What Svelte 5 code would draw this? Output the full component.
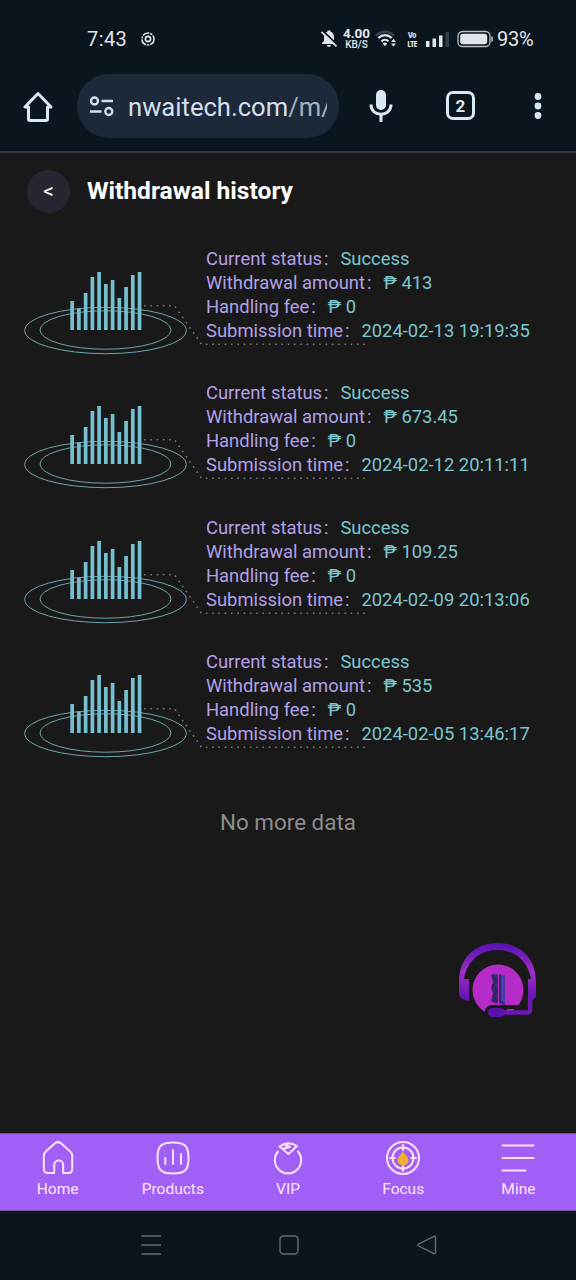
<script>
    let title = "Withdrawal history";

    const records = [
        { status: "Success", amount: "413", fee: "0", time: "2024-02-13 19:19:35" },
        { status: "Success", amount: "673.45", fee: "0", time: "2024-02-12 20:11:11" },
        { status: "Success", amount: "109.25", fee: "0", time: "2024-02-09 20:13:06" },
        { status: "Success", amount: "535", fee: "0", time: "2024-02-05 13:46:17" },
    ];

    const tabs = ["Home", "Products", "VIP", "Focus", "Mine"];

    // top edge of each bar in the chart artwork
    const bars = [61, 68.5, 53, 37, 32, 44, 40, 58, 47, 35, 32];
</script>

<div class="phone">
    <header class="status-bar">
        <span class="clock">7:43</span>
        <svg class="app-dot" width="14" height="14" viewBox="0 0 14 14">
            <circle cx="7" cy="7" r="6" stroke-dasharray="7 1 2 1" />
            <circle cx="7" cy="7" r="2.6" />
        </svg>
        <div class="indicators">
            <svg width="18" height="20" viewBox="0 0 18 20">
                <path class="solid" d="M2 15v-1l2-2V8c0-3 1.500-4.700 3.500-5.200V1.500h3v1.300c2 .5 3.500 2.200 3.500 5.200v4l2 2v1zM7 16h4a2 2 0 0 1-4 0z" />
                <path d="M2.500 1.500 17.500 16" stroke="#0b151e" stroke-width="1.800" />
                <path d="M1.500 2.800 16.500 17.300" stroke="#e1e5e9" stroke-width="1.700" />
            </svg>
            <div class="speed"><b>4.00</b><span>KB/S</span></div>
            <svg class="wifi" width="22" height="20" viewBox="0 0 22 20">
                <path d="M1 6.500c5.500-5 12.500-5 18 0" stroke="#3a434b" stroke-width="2.500" />
                <path d="M3.300 9c4-3.800 9.400-3.800 13.400 0M6.500 12.300c2.100-2 5-2 7 0" stroke="#e1e5e9" stroke-width="2.300" />
                <path class="solid" d="m7.600 14.500 2.400 2.700 2.400-2.700c-1.400-1.200-3.400-1.200-4.800 0zM16 13l2.500-3 2.500 3zM16 14.500h5l-2.500 3z" />
            </svg>
            <div class="volte"><span>Vo</span><span>LTE</span></div>
            <svg class="signal" width="23" height="18" viewBox="0 0 23 18">
                <path class="solid" d="M0 11h3.500v6H0zM6.500 8.500H10V17H6.500zM13 5.500h3.500V17H13z" />
                <path d="M19.500 2H23v15h-3.500z" fill="#353e46" />
            </svg>
            <svg class="battery" width="36" height="18" viewBox="0 0 36 18">
                <rect x="1" y="1.500" width="32" height="15" rx="4.500" stroke="#b9bec3" stroke-width="1.300" />
                <rect class="solid" x="3.200" y="3.700" width="27" height="10.600" rx="2.800" />
                <path d="M35 6.500v5" stroke="#b9bec3" stroke-width="1.600" />
            </svg>
            <span class="percent">93%</span>
        </div>
    </header>

    <nav class="browser" aria-label="Browser">
        <svg class="home" width="30" height="32" viewBox="0 0 30 32">
            <path d="M2 17h3.500v12q0 1.500 1.500 1.500h16q1.500 0 1.500-1.500V17H28L15 3.500z" stroke="#dce7f5" stroke-width="3" stroke-linejoin="round" />
        </svg>
        <div class="address">
            <svg width="26" height="22" viewBox="0 0 26 22">
                <g stroke="#d3deed" stroke-width="2.400">
                    <circle cx="5.500" cy="6" r="3.500" />
                    <path d="M12.500 6H24M1 16.500h11.500" />
                    <circle cx="19.800" cy="16.500" r="3.500" />
                </g>
            </svg>
            <span class="url">nwaitech.com<i>/m/</i></span>
        </div>
        <svg class="mic" width="24" height="34" viewBox="0 0 24 34">
            <rect x="7" y="1" width="10" height="20" rx="5" fill="#dce7f5" />
            <path d="M2 15.500c0 13 20 13 20 0M12 25v8" stroke="#dce7f5" stroke-width="3" />
        </svg>
        <div class="tab-count">2</div>
        <svg class="dots" width="8" height="28" viewBox="0 0 8 28">
            <circle cx="4" cy="4.500" r="3.400" />
            <circle cx="4" cy="14" r="3.400" />
            <circle cx="4" cy="23.500" r="3.400" />
        </svg>
    </nav>

    <main>
        <div class="heading">
            <button type="button" aria-label="Back">&lt;</button>
            <h1>{title}</h1>
        </div>

        <section class="records">
            {#each records as record}
                <article class="record">
                    <svg class="artwork" width="360" height="134" viewBox="0 0 360 134">
                        <g stroke="#6fa3ad" stroke-width="1">
                            <ellipse cx="95.500" cy="90.500" rx="80.800" ry="23.200" />
                            <ellipse cx="95.500" cy="90" rx="65.500" ry="19.200" />
                        </g>
                        {#each bars as top, i}
                            <rect x={60.300 + i * 6.740} y={top} width="3.700" height={90 - top} fill="#75bfd0" />
                        {/each}
                        <path d="M134 65.700h30.500l27 38.600H359" stroke="#77777c" stroke-width="1.600" stroke-dasharray="1.600 4.700" />
                    </svg>
                    <div class="details">
                        <p>Current status<span class="colon">:</span><em>{record.status}</em></p>
                        <p>Withdrawal amount<span class="colon">:</span><em>₱ {record.amount}</em></p>
                        <p>Handling fee<span class="colon">:</span><em>₱ {record.fee}</em></p>
                        <p>Submission time<span class="colon">:</span><em>{record.time}</em></p>
                    </div>
                </article>
            {/each}
        </section>
        <p class="end">No more data</p>
    </main>

    <!-- Floating support button -->
    <button type="button" class="support" aria-label="Customer service">
        <svg width="82" height="78" viewBox="0 0 82 78">
            <defs>
                <linearGradient id="band" x2="0" y2="1">
                    <stop offset="0" stop-color="#5611b0" />
                    <stop offset=".5" stop-color="#a12cc5" />
                    <stop offset="1" stop-color="#5d12b5" />
                </linearGradient>
            </defs>
            <circle cx="41" cy="49" r="25.500" fill="#b52bc7" />
            <path d="M2 41C2 16 19 2 40.500 2S79 16 79 41v13c0 4-3 5-8 6V38h3C71 20 58 9 40.500 9S10 20 7 38h5v22c-7-1-10-4-10-8z" fill="url(#band)" />
            <path d="M36 64h29v4H50v9H28v-8q2-5 8-5z" fill="#191919" />
            <path d="M73 57v12q0 2.500-3 2.500H47" stroke="#6c18b7" stroke-width="4.500" />
            <rect x="31" y="67" width="17" height="9" rx="4.500" fill="#5b12a8" />
            <path d="M34 34q4-2 7 0v28q-3 1-7-2l2-7-2-6 2-6z" fill="#3b2870" />
            <path d="M42 34h6v29h-6z" fill="#4d3ca7" />
            <path d="m36 36 4 4-4 5 4 5-4 5 4 5M43 33v27l5 4" stroke="#252659" stroke-width="1.500" />
        </svg>
    </button>

    <footer class="tabs">
        {#each tabs as tab}
            <a href="#{tab}">
                <svg width="36" height="36" viewBox="0 0 36 36">
                    {#if tab === "Home"}
                        <path d="M15 3.300Q18 1 21 3.300l9 8q2.200 2 2.200 4V29q0 4-4 4h-5v-8c0-6-9-6-9 0v8H8q-4.200 0-4.200-4V15.300q0-2 2.200-4z" />
                    {:else if tab === "Products"}
                        <path d="M18 2.500c12 0 15.500 3.500 15.500 15.500S30 33.500 18 33.500 2.500 30 2.500 18 6 2.500 18 2.500zM10.300 18v6M18 10v14M26 14v10" />
                    {:else if tab === "VIP"}
                        <path d="M8 11.500a13.200 13.200 0 1 0 20 0M9.500 6.500Q18 .5 27 6L18.500 14zM15 5l5 2-6 1.500" />
                    {:else if tab === "Focus"}
                        <circle cx="18" cy="18" r="16" />
                        <circle cx="18" cy="18" r="10.500" />
                        <path d="M18 5v5M18 26v5M5 18h5M26 18h5" />
                        <path d="M18 11c2 4 5.500 6 5.500 9.500a5.500 5 0 0 1-11 0C12.500 17 16 15 18 11z" fill="#efaf32" stroke="none" />
                    {:else}
                        <path d="M2.500 5.500h31M2.500 18h31M2.500 30.500h23" />
                    {/if}
                </svg>
                <span>{tab}</span>
            </a>
        {/each}
    </footer>

    <div class="system-nav">
        <svg width="22" height="22" viewBox="0 0 22 22">
            <path d="M1.500 2h19.500M1.500 11h19.500M1.500 20h19.500" />
        </svg>
        <svg width="22" height="22" viewBox="0 0 22 22">
            <rect x="2" y="2" width="18" height="18" rx="3.500" />
        </svg>
        <svg width="22" height="22" viewBox="0 0 22 22">
            <path d="M18 2.500Q19.500 1.700 19.500 3.500v15q0 1.800-1.500 1L2.500 12q-1.500-1 0-2z" />
        </svg>
    </div>
</div>

<style>
    :global(body) {
        margin: 0;
        background: #191919;
    }

    .phone {
        position: relative;
        display: flex;
        flex-direction: column;
        width: 576px;
        height: 1280px;
        overflow: hidden;
        color: white;
        background: #191919;
        font-family: Roboto, "Noto Sans", sans-serif;
    }

    svg {
        display: block;
        flex-shrink: 0;
        fill: none;
    }

    .solid {
        fill: #e1e5e9;
    }

    p,
    h1 {
        margin: 0;
    }

    button {
        padding: 0;
        border: none;
        color: inherit;
        font: inherit;
    }

    /* Status bar */
    .status-bar {
        display: flex;
        align-items: center;
        box-sizing: border-box;
        height: 74px;
        padding: 4px 42px 0 87px;
        background: #0b151e;
        color: #e1e5e9;
    }

    .clock {
        width: 54px;
        font-size: 20px;
        letter-spacing: 0.4px;
    }

    .app-dot {
        stroke: #e1e5e9;
        stroke-width: 1.6;
    }

    .indicators {
        display: flex;
        align-items: center;
        margin-left: auto;
    }

    .speed,
    .volte {
        display: flex;
        flex-direction: column;
        align-items: center;
        font-weight: 700;
    }

    .speed {
        width: 29px;
        margin-left: 4px;
        font-size: 10px;
        font-weight: 500;
        line-height: 11px;
    }

    .speed b {
        font-size: 13.5px;
    }

    .wifi {
        margin-left: 4px;
    }

    .volte {
        width: 14px;
        margin-left: 8px;
        font-family: "Open Sans", Roboto, sans-serif;
        font-size: 9px;
        font-stretch: 75%;
        letter-spacing: -0.6px;
        line-height: 9px;
    }

    .signal {
        margin-left: 7px;
    }

    .battery {
        margin-left: 8px;
    }

    .percent {
        width: 37px;
        margin-left: 4px;
        font-size: 20px;
        letter-spacing: -0.3px;
        white-space: nowrap;
    }

    /* Browser bar */
    .browser {
        display: flex;
        align-items: center;
        box-sizing: border-box;
        height: 79px;
        padding: 0 34px 14px 23px;
        border-bottom: 2px solid #34363f;
        background: #0b151e;
    }

    .address {
        display: flex;
        align-items: center;
        box-sizing: border-box;
        width: 262px;
        height: 64px;
        margin-left: 24px;
        padding: 0 12px;
        border-radius: 32px;
        background: #1d2939;
    }

    .url {
        width: 199px;
        margin-left: 13px;
        padding-top: 2px;
        overflow: hidden;
        color: #d5dfed;
        font-size: 25.6px;
        line-height: 34px;
        white-space: nowrap;
    }

    .url i {
        color: #a6b0bf;
        font-style: normal;
    }

    .mic {
        margin-left: 30px;
    }

    .tab-count {
        box-sizing: border-box;
        width: 29px;
        height: 29px;
        margin-left: 53px;
        border: 3px solid #dce7f5;
        border-radius: 7px;
        color: #dce7f5;
        font-size: 17px;
        font-weight: 700;
        line-height: 24px;
        text-align: center;
    }

    .dots {
        margin-left: auto;
        fill: #dce7f5;
    }

    /* Page */
    main {
        flex: 1;
    }

    .heading {
        display: flex;
        align-items: center;
        height: 76px;
        padding-left: 27px;
    }

    .heading button {
        width: 43px;
        height: 43px;
        border-radius: 50%;
        background: #262632;
        font-size: 21px;
    }

    .heading h1 {
        margin: -2px 0 0 17px;
        font-size: 24.6px;
        font-weight: 700;
    }

    .records {
        padding-top: 11px;
    }

    .record {
        display: grid;
        height: 134.4px;
    }

    .artwork,
    .details {
        grid-area: 1 / 1;
    }

    .artwork {
        margin-left: 10px;
    }

    .details {
        padding: 7px 0 0 206px;
        color: #b2a0e8;
        font-size: 18.4px;
        line-height: 24px;
        white-space: nowrap;
    }

    .colon {
        display: inline-block;
        width: 18.4px;
        text-indent: 2px;
    }

    em {
        color: #7bc7cf;
        font-style: normal;
    }

    .end {
        margin-top: 29px;
        color: #8c8c8c;
        font-size: 22.4px;
        line-height: 30px;
        text-align: center;
    }

    .support {
        position: absolute;
        top: 941px;
        left: 457px;
        background: none;
    }

    /* Bottom tabs */
    .tabs {
        display: grid;
        grid-template-columns: repeat(5, 1fr);
        box-sizing: border-box;
        height: 78px;
        padding-top: 6px;
        border-top: 1px solid #76529c;
        border-bottom: 1px solid #76529c;
        background: #a15ff5;
    }

    .tabs a {
        display: flex;
        flex-direction: column;
        gap: 2px;
        align-items: center;
        color: #ffe5ff;
        font-size: 15.5px;
        line-height: 22px;
        text-decoration: none;
    }

    .tabs svg {
        stroke: #ffe2fa;
        stroke-width: 2;
        stroke-linecap: round;
        stroke-linejoin: round;
    }

    .system-nav {
        display: flex;
        align-items: center;
        justify-content: center;
        gap: 116px;
        box-sizing: border-box;
        height: 69px;
        padding: 0 0 2px 2px;
        background: #0b151e;
    }

    .system-nav svg {
        stroke: #626b72;
        stroke-width: 1.4;
    }
</style>
